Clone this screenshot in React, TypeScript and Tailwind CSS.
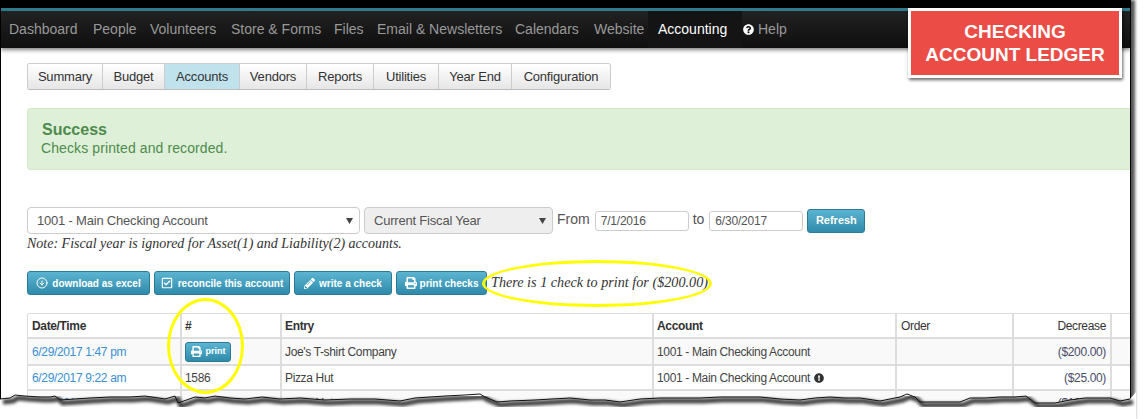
import React from 'react';
import { CircleArrowDown } from 'lucide-react';
import { FaExclamationCircle, FaPencilAlt, FaPrint, FaQuestionCircle, FaRegCheckSquare } from 'react-icons/fa';

const navItems = [
    { label: 'Dashboard', width: 'w-[84px]' },
    { label: 'People', width: 'w-[57px]' },
    { label: 'Volunteers', width: 'w-[81px]' },
    { label: 'Store & Forms', width: 'w-[103px]' },
    { label: 'Files', width: 'w-[43px]' },
    { label: 'Email & Newsletters', width: 'w-[138px]' },
    { label: 'Calendars', width: 'w-[79px]' },
    { label: 'Website', width: 'w-[54px]' },
];

const tabs = [
    { label: 'Summary', width: 'w-[74px]' },
    { label: 'Budget', width: 'w-[62px]' },
    { label: 'Accounts', width: 'w-[75px]' },
    { label: 'Vendors', width: 'w-[67px]' },
    { label: 'Reports', width: 'w-[67px]' },
    { label: 'Utilities', width: 'w-[65px]' },
    { label: 'Year End', width: 'w-[73px]' },
    { label: 'Configuration', width: 'w-[99px]' },
];

const tearEdge: [number, number][] = [
    [0, 399], [10, 398], [15, 395], [25, 396], [40, 397], [50, 397], [55, 396], [60, 400], [75, 399], [90, 398], [110, 397], [130, 397],
    [145, 396], [165, 399], [175, 396], [178, 403], [195, 397], [205, 398], [215, 396], [230, 398], [245, 399], [262, 397], [280, 399],
    [300, 398], [325, 400], [350, 399], [375, 399], [400, 401], [415, 398], [430, 397], [445, 396], [465, 395], [480, 394], [485, 397], [497, 402],
    [510, 401], [535, 400], [552, 399], [570, 398], [590, 400], [605, 400], [620, 402], [640, 399], [660, 398], [680, 398], [700, 398], [720, 397],
    [740, 397], [760, 397], [780, 399], [800, 400], [815, 398], [830, 397], [845, 398], [860, 398], [880, 401], [900, 397], [907, 394], [915, 397],
    [920, 402], [940, 402], [960, 402], [970, 398], [985, 398], [1000, 397], [1015, 397], [1026, 396], [1035, 403], [1055, 403], [1070, 400], [1085, 398],
    [1110, 398], [1120, 401], [1130, 399],
];
const tearPoints = tearEdge.map(([x, y]) => `${x},${y}`).join(' ');

const BlueButton: React.FC<{ className?: string; children: React.ReactNode }> = ({ className = '', children }) => (
    <div className={`flex items-center justify-center rounded-[3px] border border-[#2b7a96] bg-gradient-to-b from-[#5bb5d1] to-[#2f8bab] text-white font-bold ${className}`}>
        {children}
    </div>
);

const SelectCaret = () => (
    <svg width="7" height="6" viewBox="0 0 7 6" className="text-[#444]">
        <path d="M0 0h7L3.5 6z" fill="currentColor" />
    </svg>
);

const Row: React.FC<{
    date: string;
    num: React.ReactNode;
    entry: string;
    account: React.ReactNode;
    amount: string;
    shaded?: boolean;
    height: string;
}> = ({ date, num, entry, account, amount, shaded, height }) => (
    <div className={`flex border-b-2 border-[#ddd] text-[12px] tracking-[-0.35px] ${height} ${shaded ? 'bg-[#f9f9f9]' : 'bg-white'}`}>
        <div className="w-[153px] pl-[4px] flex items-center text-[#3b8fd0] border-l border-[#ddd]">{date}</div>
        <div className="w-[100px] pl-[3px] flex items-center border-l-2 border-[#ddd] text-[#3f3f3f]">{num}</div>
        <div className="w-[372px] pl-[3px] flex items-center border-l-2 border-[#ddd] text-[#3f3f3f]">{entry}</div>
        <div className="w-[243px] pl-[3px] flex items-center border-l-2 border-[#ddd] text-[#444]">{account}</div>
        <div className="w-[117px] border-l-2 border-[#ddd]" />
        <div className="w-[98px] pr-[4px] flex items-center justify-end border-l-2 border-[#ddd] text-[#4a4a68]">{amount}</div>
        <div className="flex-1 border-l-2 border-[#ddd]" />
    </div>
);

export default function App() {
    return (
        <div className="relative w-[1146px] h-[419px] overflow-hidden bg-white font-['Liberation_Sans',Arial,sans-serif]">
            {/* Screenshot frame */}
            <div className="w-[1131px] h-[419px] overflow-hidden border-x border-black shadow-[4px_0_3px_#555] bg-white">
                <div className="h-[8px] bg-black" />
                <div className="h-[40px] border-t-[3px] border-[#2f7a8c] bg-gradient-to-b from-[#222] to-[#0f0f0f] flex items-stretch pl-[8px] text-[14px] text-[#999] shadow-[0_2px_4px_rgba(0,0,0,0.5)]">
                    {navItems.map(item => (
                        <span key={item.label} className={`${item.width} shrink-0 flex items-center whitespace-nowrap`}>{item.label}</span>
                    ))}
                    <span className="w-[94px] shrink-0 pl-[10px] flex items-center bg-[#141414] text-white whitespace-nowrap">Accounting</span>
                    <span className="flex items-center gap-[4px] ml-[1px]">
                        <FaQuestionCircle size={11} className="text-white" />
                        Help
                    </span>
                </div>

                <div className="pl-[26px]">
                    {/* Tabs */}
                    <div className="mt-[15px] flex w-fit h-[27px] rounded-[3px] border border-[#ccc] border-b-[#bbb] overflow-hidden text-[13px] tracking-[-0.2px] text-[#333]">
                        {tabs.map((tab, i) => (
                            <div
                                key={tab.label}
                                className={`${tab.width} flex items-center justify-center whitespace-nowrap ${i > 0 ? 'border-l border-[#ccc]' : ''} ${tab.label === 'Accounts' ? 'bg-[#c0e2ec]' : 'bg-gradient-to-b from-white to-[#e6e6e6]'}`}
                            >
                                {tab.label}
                            </div>
                        ))}
                    </div>

                    {/* Alert */}
                    <div className="mt-[18px] h-[62px] rounded-l-[4px] border border-r-0 border-[#d6e9c6] bg-[#dff0d8] pl-[14px] pt-[12px] text-[#4d8b4d]">
                        <div className="text-[16px] leading-[18px] font-bold">Success</div>
                        <div className="text-[14px] leading-[18px] -ml-[1px] tracking-[0.1px]">Checks printed and recorded.</div>
                    </div>

                    {/* Filters */}
                    <div className="mt-[37px] flex items-center h-[27px] text-[#555] text-[13px] tracking-[-0.2px]">
                        <div className="w-[333px] h-[27px] rounded-[4px] border border-[#ccc] bg-white pl-[9px] pr-[6px] flex items-center justify-between">
                            <span>1001 - Main Checking Account</span>
                            <SelectCaret />
                        </div>
                        <div className="ml-[4px] w-[189px] h-[27px] rounded-[4px] border border-[#ccc] bg-[#eee] pl-[9px] pr-[6px] flex items-center justify-between">
                            <span>Current Fiscal Year</span>
                            <SelectCaret />
                        </div>
                        <span className="ml-[4px] text-[14px] tracking-normal mb-[2px]">From</span>
                        <div className="ml-[5px] w-[94px] h-[20px] rounded-[3px] border border-[#ccc] pl-[5px] flex items-center text-[12px]">7/1/2016</div>
                        <span className="ml-[4px] text-[14px] tracking-normal mb-[2px]">to</span>
                        <div className="ml-[5px] w-[94px] h-[20px] rounded-[3px] border border-[#ccc] pl-[5px] flex items-center text-[12px]">6/30/2017</div>
                        <BlueButton className="ml-[4px] w-[58px] h-[24px] text-[11px] tracking-normal">Refresh</BlueButton>
                    </div>
                    <div className="mt-[1px] h-[18px] text-[14px] leading-[18px] italic text-[#333] font-['Liberation_Serif',Georgia,serif]">
                        Note: Fiscal year is ignored for Asset(1) and Liability(2) accounts.
                    </div>

                    {/* Actions */}
                    <div className="mt-[18px] flex items-center h-[24px] text-[10px]">
                        <BlueButton className="w-[123px] h-[24px] gap-[4px]"><CircleArrowDown size={12} strokeWidth={2} />download as excel</BlueButton>
                        <BlueButton className="ml-[4px] w-[136px] h-[24px] gap-[5px]"><FaRegCheckSquare size={12} />reconcile this account</BlueButton>
                        <BlueButton className="ml-[4px] w-[98px] h-[24px] gap-[4px]"><FaPencilAlt size={11} />write a check</BlueButton>
                        <BlueButton className="ml-[4px] w-[91px] h-[24px] gap-[3px]"><FaPrint size={12} />print checks</BlueButton>
                        <span className="ml-[4px] text-[14.2px] italic text-[#333] font-['Liberation_Serif',Georgia,serif] whitespace-nowrap">There is 1 check to print for ($200.00)</span>
                    </div>

                    {/* Ledger table */}
                    <div className="mt-[18px]">
                        <div className="flex h-[26px] border-t border-b-2 border-[#ddd] rounded-tl-[3px] text-[12px] tracking-[-0.35px] text-[#333] font-bold">
                            <div className="w-[153px] pl-[4px] flex items-center border-l border-[#ddd]">Date/Time</div>
                            <div className="w-[100px] pl-[3px] flex items-center border-l-2 border-[#ddd]">#</div>
                            <div className="w-[372px] pl-[3px] flex items-center border-l-2 border-[#ddd]">Entry</div>
                            <div className="w-[243px] pl-[3px] flex items-center border-l-2 border-[#ddd]">Account</div>
                            <div className="w-[117px] pl-[4px] flex items-center border-l-2 border-[#ddd] font-normal">Order</div>
                            <div className="w-[98px] pr-[4px] flex items-center justify-end border-l-2 border-[#ddd] font-normal">Decrease</div>
                            <div className="flex-1 border-l-2 border-[#ddd]" />
                        </div>
                        <Row
                            shaded
                            height="h-[27px]"
                            date="6/29/2017 1:47 pm"
                            num={
                                <BlueButton className="w-[46px] h-[20px] text-[9px] tracking-normal gap-[4px]"><FaPrint size={11} />print</BlueButton>
                            }
                            entry="Joe's T-shirt Company"
                            account="1001 - Main Checking Account"
                            amount="($200.00)"
                        />
                        <Row
                            height="h-[25px]"
                            date="6/29/2017 9:22 am"
                            num="1586"
                            entry="Pizza Hut"
                            account={
                                <span className="flex items-center gap-[4px]">1001 - Main Checking Account <FaExclamationCircle size={10} className="text-[#333]" /></span>
                            }
                            amount="($25.00)"
                        />
                        <Row
                            shaded
                            height="h-[25px]"
                            date="6/29/2017 5:18 pm"
                            num=""
                            entry="Pizza Hut"
                            account="1001 - Main Checking Account"
                            amount="($100.00)"
                        />
                    </div>
                </div>
            </div>

            {/* Torn bottom edge of the screenshot */}
            <svg className="absolute left-0 top-0" width="1146" height="419" viewBox="0 0 1146 419">
                <defs>
                    <filter id="tearBlur" x="-5%" y="-5%" width="110%" height="110%">
                        <feGaussianBlur stdDeviation="1.5" />
                    </filter>
                </defs>
                <polygon points={`${tearPoints} 1136,392 1136,419 0,419`} fill="#fff" />
                <polyline points={tearEdge.map(([x, y]) => `${x + 3},${y + 3}`).join(' ')} fill="none" stroke="#444" strokeWidth="5" filter="url(#tearBlur)" />
                <polyline points={tearPoints} fill="none" stroke="#111" strokeWidth="1" />
            </svg>

            {/* Annotations */}
            <div className="absolute left-[482px] top-[260px] w-[230px] h-[47px] rounded-[50%] border-[3px] border-[#ffff00]" />
            <div className="absolute left-[167px] top-[298px] w-[77px] h-[96px] rounded-[50%] border-[3px] border-[#ffff00]" />
            <div className="absolute left-[908px] top-[8px] w-[214px] h-[70px] border-[3px] border-white bg-[#eb4c46] shadow-[1px_2px_3px_rgba(0,0,0,0.6)] flex flex-col items-center justify-center text-white text-[19px] leading-[23px] font-bold">
                <div>CHECKING</div>
                <div>ACCOUNT LEDGER</div>
            </div>
        </div>
    );
}
